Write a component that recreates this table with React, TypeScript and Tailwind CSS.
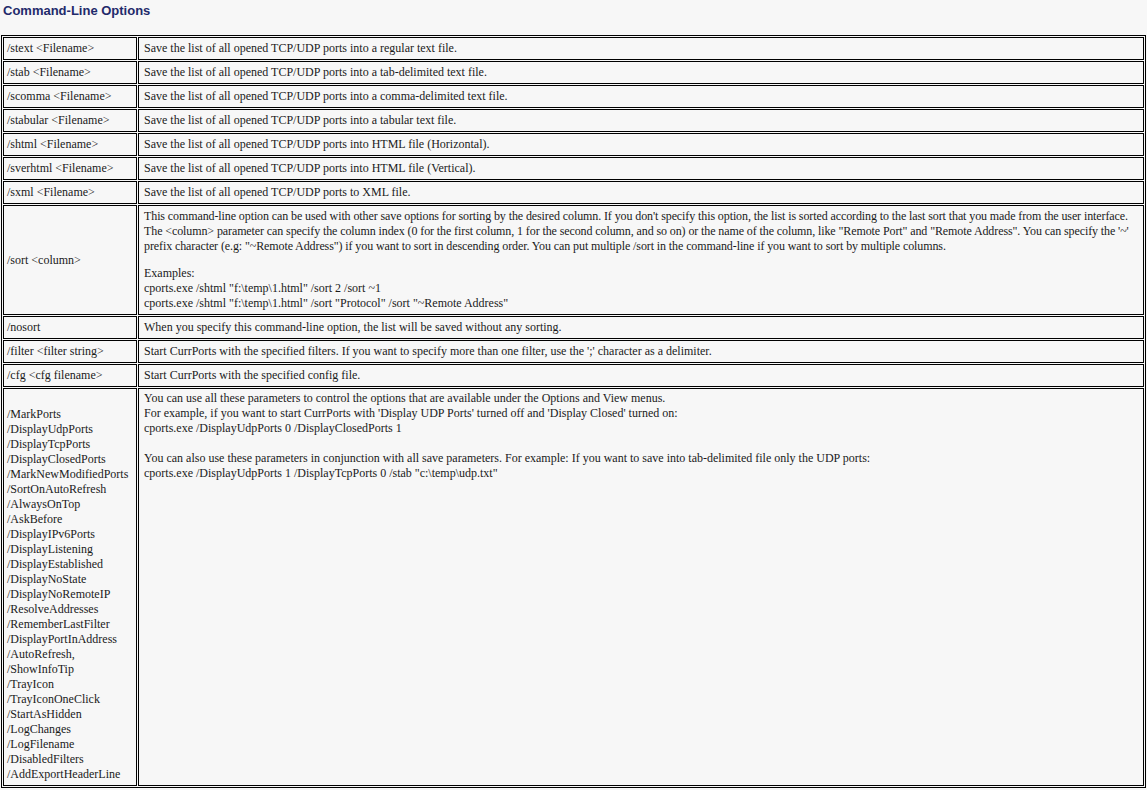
import React from "react";

const simpleRows = [
  ["/stext <Filename>", "Save the list of all opened TCP/UDP ports into a regular text file."],
  ["/stab <Filename>", "Save the list of all opened TCP/UDP ports into a tab-delimited text file."],
  ["/scomma <Filename>", "Save the list of all opened TCP/UDP ports into a comma-delimited text file."],
  ["/stabular <Filename>", "Save the list of all opened TCP/UDP ports into a tabular text file."],
  ["/shtml <Filename>", "Save the list of all opened TCP/UDP ports into HTML file (Horizontal)."],
  ["/sverhtml <Filename>", "Save the list of all opened TCP/UDP ports into HTML file (Vertical)."],
  ["/sxml <Filename>", "Save the list of all opened TCP/UDP ports to XML file."],
];

const laterRows = [
  ["/nosort", "When you specify this command-line option, the list will be saved without any sorting."],
  ["/filter <filter string>", "Start CurrPorts with the specified filters. If you want to specify more than one filter, use the ';' character as a delimiter."],
  ["/cfg <cfg filename>", "Start CurrPorts with the specified config file."],
];

const flags = [
  "/MarkPorts",
  "/DisplayUdpPorts",
  "/DisplayTcpPorts",
  "/DisplayClosedPorts",
  "/MarkNewModifiedPorts",
  "/SortOnAutoRefresh",
  "/AlwaysOnTop",
  "/AskBefore",
  "/DisplayIPv6Ports",
  "/DisplayListening",
  "/DisplayEstablished",
  "/DisplayNoState",
  "/DisplayNoRemoteIP",
  "/ResolveAddresses",
  "/RememberLastFilter",
  "/DisplayPortInAddress",
  "/AutoRefresh,",
  "/ShowInfoTip",
  "/TrayIcon",
  "/TrayIconOneClick",
  "/StartAsHidden",
  "/LogChanges",
  "/LogFilename",
  "/DisabledFilters",
  "/AddExportHeaderLine",
];

const leftCell = "border border-black px-[3px] py-[3px] align-middle w-[134px]";
const rightCell = "border border-black px-[5px] py-[3px] align-top";

function SimpleRow({ opt, desc }: { opt: string; desc: string }) {
  return (
    <tr>
      <td className={leftCell}>{opt}</td>
      <td className={rightCell}>{desc}</td>
    </tr>
  );
}

export default function App() {
  return (
    <div className="min-h-[790px] bg-[#f7f7f7] px-[1px] text-[#1a1a1a]">
      <h4 className="pl-[2px] pt-[3px] pb-[16px] font-['Liberation_Sans',Arial,sans-serif] text-[13px] leading-[16px] font-bold text-[#1f2a6b]">
        Command-Line Options
      </h4>
      <table className="w-[1145px] border-separate border-spacing-[1px] border border-black font-['Liberation_Serif','Times_New_Roman',serif] text-[12px] leading-[15px]">
        <tbody>
          {simpleRows.map(([opt, desc]) => (
            <SimpleRow key={opt} opt={opt} desc={desc} />
          ))}
          <tr>
            <td className={leftCell}>/sort &lt;column&gt;</td>
            <td className={rightCell}>
              <p className="mb-[12px] tracking-[-0.1px]">
                This command-line option can be used with other save options for sorting by the desired column. If you don't
                specify this option, the list is sorted according to the last sort that you made from the user interface.
                <br />
                The &lt;column&gt; parameter can specify the column index (0 for the first column, 1 for the second column,
                and so on) or the name of the column, like "Remote Port" and "Remote Address". You can specify the '~'
                <br />
                prefix character (e.g: "~Remote Address") if you want to sort in descending order. You can put multiple
                /sort in the command-line if you want to sort by multiple columns.
              </p>
              <p>
                Examples:
                <br />
                cports.exe /shtml "f:\temp\1.html" /sort 2 /sort ~1
                <br />
                cports.exe /shtml "f:\temp\1.html" /sort "Protocol" /sort "~Remote Address"
              </p>
            </td>
          </tr>
          {laterRows.map(([opt, desc]) => (
            <SimpleRow key={opt} opt={opt} desc={desc} />
          ))}
          <tr>
            <td className="border border-black px-[3px] pt-[18px] pb-[3px] align-middle w-[134px]">
              {flags.map((f) => (
                <div key={f}>{f}</div>
              ))}
            </td>
            <td className="border border-black px-[5px] pt-[2px] pb-[3px] align-top">
              <p className="mb-[15px]">
                You can use all these parameters to control the options that are available under the Options and View menus.
                <br />
                For example, if you want to start CurrPorts with 'Display UDP Ports' turned off and 'Display Closed' turned on:
                <br />
                cports.exe /DisplayUdpPorts 0 /DisplayClosedPorts 1
              </p>
              <p>
                You can also use these parameters in conjunction with all save parameters. For example: If you want to save
                into tab-delimited file only the UDP ports:
                <br />
                cports.exe /DisplayUdpPorts 1 /DisplayTcpPorts 0 /stab "c:\temp\udp.txt"
              </p>
            </td>
          </tr>
        </tbody>
      </table>
    </div>
  );
}
